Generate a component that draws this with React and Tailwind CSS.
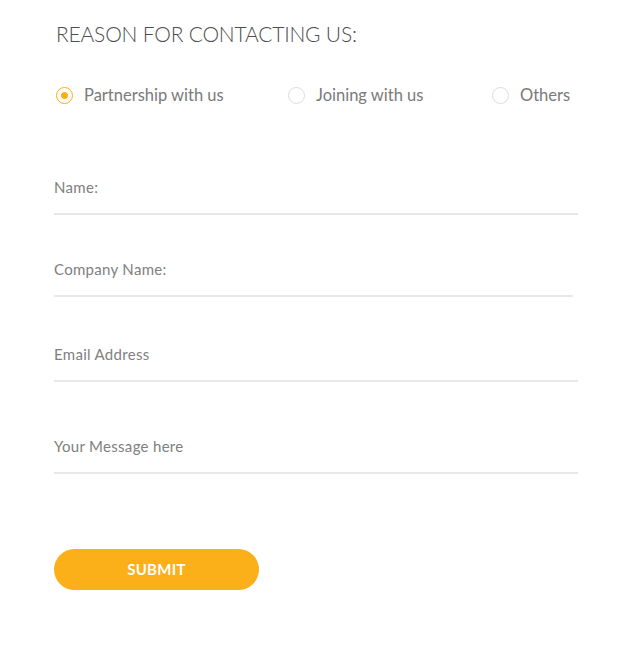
export default function App() {
  const font = { fontFamily: 'Lato, "Open Sans", sans-serif' };
  const Radio = ({ label, checked }) => (
    <label className="flex items-center gap-[11px]">
      <span
        className={`flex h-[17px] w-[17px] items-center justify-center rounded-full border ${
          checked ? "border-[#fbb01a]" : "border-[#dcdcdc]"
        }`}
      >
        {checked && <span className="h-[7px] w-[7px] rounded-full bg-[#fbb01a]" />}
      </span>
      <span className="text-[16.5px] text-[#7a7a7a]">{label}</span>
    </label>
  );
  const Field = ({ label, w = "w-[524px]", mt }) => (
    <div className={`${w} ${mt} border-b-2 border-[#e8e8e8] pb-[14px]`}>
      <span className="text-[15px] tracking-[0.3px] text-[#808080]">{label}</span>
    </div>
  );
  return (
    <div className="min-h-[656px] w-[618px] bg-white pl-[54px] pt-[20px]" style={font}>
      <h2 className="ml-[2px] text-[21px] font-light leading-[28px] tracking-[-0.2px] text-[#4e4e4e]">
        REASON FOR CONTACTING US:
      </h2>
      <div className="mt-[35px] flex items-center">
        <div className="w-[234px] pl-[2px]"><Radio label="Partnership with us" checked /></div>
        <div className="w-[204px]"><Radio label="Joining with us" /></div>
        <Radio label="Others" />
      </div>
      <div className="flex flex-col">
        <Field label="Name:" mt="mt-[67px]" />
        <Field label="Company Name:" w="w-[519px]" mt="mt-[42px]" />
        <Field label="Email Address" mt="mt-[45px]" />
        <Field label="Your Message here" mt="mt-[52px]" />
      </div>
      <button className="mt-[75px] flex h-[41px] w-[205px] items-center justify-center rounded-full bg-[#fbb01a] text-[15px] font-bold tracking-[0.3px] text-white">
        SUBMIT
      </button>
    </div>
  );
}
